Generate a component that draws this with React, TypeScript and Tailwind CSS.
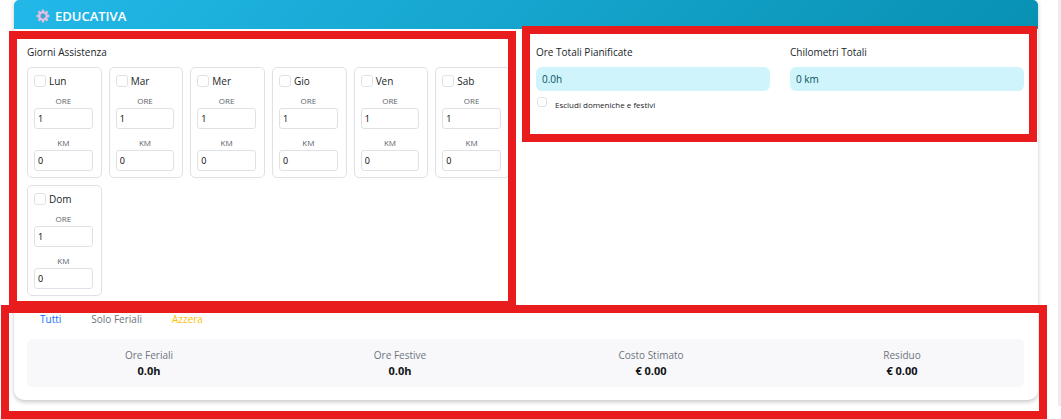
import React, { useState } from 'react';

const DAYS = ['Lun', 'Mar', 'Mer', 'Gio', 'Ven', 'Sab', 'Dom'];

const TOTALS = [
  { label: 'Ore Feriali', value: '0.0h' },
  { label: 'Ore Festive', value: '0.0h' },
  { label: 'Costo Stimato', value: '€ 0.00' },
  { label: 'Residuo', value: '€ 0.00' },
];

const TEETH = [0, 45, 90, 135, 180, 225, 270, 315];

function GearIcon() {
  return (
    <svg viewBox="0 0 28 28" className="size-[14px]" aria-hidden="true">
      <g fill="#d3bce0">
        {TEETH.map((angle) => (
          <path key={angle} d="M11 7 L11.6 1 H16.4 L17 7 Z" transform={`rotate(${angle} 14 14)`} />
        ))}
      </g>
      <circle cx="14" cy="14" r="7" fill="none" stroke="#dcc6e4" strokeWidth="5" />
      <circle cx="14" cy="14" r="4.5" fill="none" stroke="#8d7fae" strokeWidth="1.5" />
    </svg>
  );
}

function Tick({ id, className }: { id: string; className: string }) {
  return (
    <input
      id={id}
      type="checkbox"
      className={`shrink-0 appearance-none rounded-[3px] border border-[#dee2e6] bg-white checked:border-[#0d6efd] checked:bg-[#0d6efd] ${className}`}
    />
  );
}

function NumberField({ id, label, initial }: { id: string; label: string; initial: string }) {
  const [value, setValue] = useState(initial);
  return (
    <div className="mt-[9px] flex flex-col gap-[2px]">
      <label htmlFor={id} className="text-center text-[8px] leading-[10px] text-[#5c636a]">
        {label}
      </label>
      <input
        id={id}
        inputMode="numeric"
        value={value}
        onChange={(e) => setValue(e.target.value)}
        className="h-[21px] w-full min-w-0 rounded-[3px] border border-[#dee2e6] bg-white px-[3px] text-[9px] text-black"
      />
    </div>
  );
}

function DayCard({ day }: { day: string }) {
  return (
    <div className="rounded-[5px] border border-[#dee2e6] py-[6px] pr-2 pl-[6px]">
      <div className="mt-px flex h-3 items-center gap-[3px]">
        <Tick id={`day-${day}`} className="size-3" />
        <label htmlFor={`day-${day}`} className="text-[10px] leading-3 text-[#212529]">
          {day}
        </label>
      </div>
      <NumberField id={`ore-${day}`} label="ORE" initial="1" />
      <NumberField id={`km-${day}`} label="KM" initial="0" />
    </div>
  );
}

function TotalField({ id, label, value }: { id: string; label: string; value: string }) {
  return (
    <div className="flex flex-col gap-[6px]">
      <label htmlFor={id} className="text-[10px] leading-[18px] text-[#212529]">
        {label}
      </label>
      <input
        id={id}
        readOnly
        value={value}
        className="h-6 w-full min-w-0 rounded-[6px] bg-[#cff4fc] px-[6px] text-[10px] text-[#055160]"
      />
    </div>
  );
}

function Frame({ className }: { className: string }) {
  return <div className={`pointer-events-none absolute z-10 border-8 border-[#e81c1c] ${className}`} />;
}

export default function App() {
  return (
    <div className="flex min-h-screen items-start bg-white pl-[14px] font-['Open_Sans','Noto_Sans',sans-serif]">
      <main className="min-w-0 flex-1 rounded-b-[10px] bg-white shadow-[0_2px_4px_rgba(0,0,0,0.22)]">
        <header className="flex h-[29px] items-center gap-[5px] rounded-t-[5px] bg-linear-[135deg] from-[#22b8e8] to-[#0891b2] px-[22px] pt-[2px]">
          <GearIcon />
          <h1 className="text-[13px] leading-4 font-semibold text-white">EDUCATIVA</h1>
        </header>

        <div className="pt-[14px] pr-[14px] pb-[13px] pl-[13px]">
          <div className="grid grid-cols-[483fr_488fr] items-start gap-[26px]">
            <section className="relative">
              <h2 className="mb-[6px] text-[10px] leading-[18px] text-[#212529]">Giorni Assistenza</h2>
              <div className="grid grid-cols-6 gap-[7px]">
                {DAYS.map((day) => (
                  <DayCard key={day} day={day} />
                ))}
              </div>
              <Frame className="-top-3 -right-[6px] -bottom-[13px] -left-[18px]" />
            </section>

            <section className="relative">
              <div className="grid grid-cols-2 gap-5">
                <TotalField id="ore-totali" label="Ore Totali Pianificate" value="0.0h" />
                <TotalField id="km-totali" label="Chilometri Totali" value="0 km" />
              </div>
              <div className="mt-[6px] flex h-[15px] items-start gap-2 pl-px">
                <Tick id="escludi" className="size-[10px]" />
                <label htmlFor="escludi" className="text-[8px] leading-[15px] text-[#212529]">
                  Escludi domeniche e festivi
                </label>
              </div>
              <Frame className="-top-[17px] -right-[13px] -bottom-[30px] -left-[14px]" />
            </section>
          </div>

          <section className="relative mt-[14px]">
            <div className="flex gap-[30px] px-[13px] text-[10px] leading-[18px]">
              <button type="button" className="text-[#0d6efd]">Tutti</button>
              <button type="button" className="text-[#6c757d]">Solo Feriali</button>
              <button type="button" className="text-[#ffc107]">Azzera</button>
            </div>
            <dl className="mt-[11px] grid grid-cols-4 gap-[7px] rounded-[5px] bg-[#f8f8fb] py-2 text-center">
              {TOTALS.map(({ label, value }) => (
                <div key={label}>
                  <dt className="text-[10px] leading-4 text-[#6c757d]">{label}</dt>
                  <dd className="text-[11px] leading-4 font-bold text-[#111315]">{value}</dd>
                </div>
              ))}
            </dl>
            <Frame className="-top-[5px] -right-[23px] -bottom-8 -left-[26px]" />
          </section>
        </div>
      </main>
      <div className="ml-5 h-[406px] w-[3px] shrink-0 bg-[#ededed]" />
    </div>
  );
}
